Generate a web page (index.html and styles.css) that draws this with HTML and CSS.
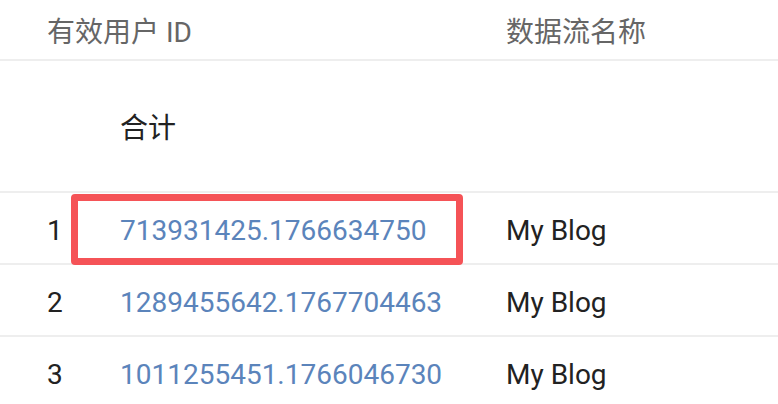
FILE: index.html
```html
<!DOCTYPE html>
<html lang="zh-CN">
<head>
  <meta charset="UTF-8" />
  <meta name="viewport" content="width=device-width, initial-scale=1.0"/>
  <title>有效用户</title>
  <link rel="stylesheet" href="styles.css">
</head>
<body>
  <div class="report">
    <div class="row head">
      <div class="cell span2">有效用户 ID</div>
      <div class="cell">数据流名称</div>
    </div>

    <div class="row total">
      <div class="cell"></div>
      <div class="cell">合计</div>
      <div class="cell"></div>
    </div>

    <div class="row item">
      <div class="cell num">1</div>
      <div class="cell"><a class="uid" href="#">713931425.1766634750</a></div>
      <div class="cell">My Blog</div>
      <div class="mark"></div>
    </div>

    <div class="row item">
      <div class="cell num">2</div>
      <div class="cell"><a class="uid" href="#">1289455642.1767704463</a></div>
      <div class="cell">My Blog</div>
    </div>

    <div class="row item">
      <div class="cell num">3</div>
      <div class="cell"><a class="uid" href="#">1011255451.1766046730</a></div>
      <div class="cell">My Blog</div>
    </div>
  </div>
</body>
</html>
```

FILE: styles.css
```css
body {
  margin: 0;
  background: #fff;
  font-family: Roboto, "Noto Sans CJK SC", sans-serif;
  font-size: 28px;
  color: #222;
  overflow: hidden;
}
.report {
  width: 778px;
}
.row {
  position: relative;
  display: grid;
  grid-template-columns: 73px 386px 1fr;
  align-items: center;
  padding-left: 47px;
  border-bottom: 2px solid #eeeeee;
}
.cell {
  white-space: nowrap;
}
.span2 {
  grid-column: span 2;
}
.head {
  height: 59px;
  color: #666;
}
.total {
  height: 130px;
}
.item {
  height: 70px;
  padding-top: 4px;
  box-sizing: border-box;
  height: 72px;
}
.num {
  color: #222;
}
.uid {
  color: #5b84bb;
  text-decoration: none;
}
.mark {
  position: absolute;
  left: 71px;
  top: 1px;
  width: 392px;
  height: 71px;
  box-sizing: border-box;
  border: 7px solid #f55357;
  border-radius: 4px;
}
```
